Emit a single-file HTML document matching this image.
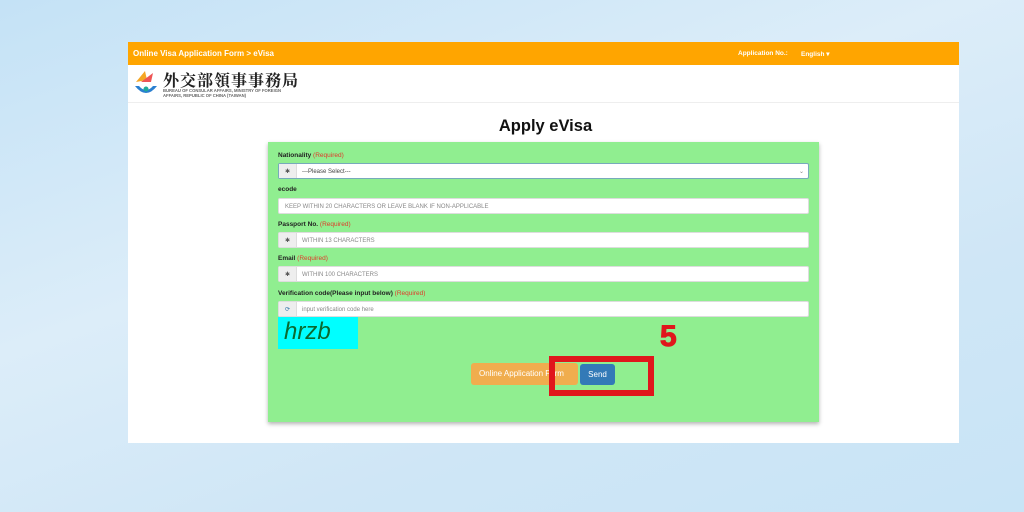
<!DOCTYPE html>
<html><head><meta charset="utf-8"><style>
*{margin:0;padding:0;box-sizing:border-box}
body{width:1024px;height:512px;overflow:hidden;position:relative;font-family:"Liberation Sans",sans-serif;background:linear-gradient(160deg,#c4e2f6 0%,#dcedf9 40%,#cfe6f6 70%,#c8e4f6 100%)}
.abs{position:absolute}
.page{left:128px;top:42px;width:831px;height:401px;background:#fff}
.bar{left:128px;top:42px;width:831px;height:23px;background:#ffa500;color:#fff;font-size:8px;font-weight:bold}
.lbl{font-size:6.5px;font-weight:bold;color:#222;left:278px}
.lbl span{color:#e03a2a;font-weight:normal}
.inp{left:278px;width:531px;height:16px;background:#fff;border-radius:2px;font-size:6px;color:#888;line-height:16px;border:1px solid #ddd}
.ad{display:inline-block;width:18px;height:100%;background:#eee;text-align:center;color:#555;margin-right:5px;border-right:1px solid #ddd;vertical-align:top}
</style></head><body>
<div class="abs page"></div>
<div class="abs bar"><span class="abs" style="left:5px;top:7px">Online Visa Application Form &gt; eVisa</span><span class="abs" style="left:610px;top:8px;font-size:6.5px">Application No.:</span><span class="abs" style="left:673px;top:8px;font-size:6.5px">English ▾</span></div>
<svg class="abs" style="left:133px;top:68px" width="26" height="32" viewBox="0 0 26 32"><path d="M3 14 L12 3 L14 12 Z" fill="#f5a623"/><path d="M8 14 L20 5 L18 14Z" fill="#e55"/><path d="M2 18 Q13 32 24 18 L20 18 Q13 26 6 18Z" fill="#2a7fd0"/><circle cx="13" cy="21" r="2.5" fill="#2a9"/></svg>
<div class="abs" style="left:163px;top:68px;font-family:'Noto Serif CJK SC',serif;font-size:16px;font-weight:bold;color:#222;letter-spacing:1px">外交部領事事務局</div>
<div class="abs" style="left:163px;top:88px;font-size:4.2px;color:#666;line-height:5px;font-weight:bold">BUREAU OF CONSULAR AFFAIRS, MINISTRY OF FOREIGN<br>AFFAIRS, REPUBLIC OF CHINA (TAIWAN)</div>
<div class="abs" style="left:128px;top:102px;width:831px;height:1px;background:#eee"></div>
<div class="abs" style="left:128px;top:117px;width:831px;text-align:center;font-size:16.5px;font-weight:bold;color:#111;padding-left:4px">Apply eVisa</div>
<div class="abs" style="left:268px;top:142px;width:551px;height:280px;background:#90ee90;box-shadow:0 2px 4px rgba(0,0,0,.3)"></div>
<div class="abs lbl" style="top:152px">Nationality <span>(Required)</span></div>
<div class="abs inp" style="top:163px;border-color:#7ab"><span class="ad">✱</span><span style="color:#444">---Please Select---</span><span style="position:absolute;right:4px">⌄</span></div>
<div class="abs lbl" style="top:186px">ecode</div>
<div class="abs inp" style="top:198px;padding-left:6px">KEEP WITHIN 20 CHARACTERS OR LEAVE BLANK IF NON-APPLICABLE</div>
<div class="abs lbl" style="top:221px">Passport No. <span>(Required)</span></div>
<div class="abs inp" style="top:232px"><span class="ad">✱</span>WITHIN 13 CHARACTERS</div>
<div class="abs lbl" style="top:255px">Email <span>(Required)</span></div>
<div class="abs inp" style="top:266px"><span class="ad">✱</span>WITHIN 100 CHARACTERS</div>
<div class="abs lbl" style="top:290px">Verification code(Please input below) <span>(Required)</span></div>
<div class="abs inp" style="top:301px"><span class="ad" style="color:#37a">⟳</span>input verification code here</div>
<div class="abs" style="left:278px;top:317px;width:80px;height:32px;background:#00ffff;color:#0a6a30;font-size:24px;font-style:italic;padding-left:6px;line-height:30px">hrzb</div>
<div class="abs" style="left:471px;top:363px;width:107px;height:22px;background:#f0ad4e;border-radius:3px;color:#fff;font-size:8px;line-height:22px;padding-left:8px">Online Application Form</div>
<div class="abs" style="left:580px;top:364px;width:35px;height:21px;background:#337ab7;border-radius:3px;color:#fff;font-size:8px;line-height:21px;text-align:center">Send</div>
<div class="abs" style="left:549px;top:356px;width:105px;height:40px;border:6px solid #e0161c"></div>
<div class="abs" style="left:660px;top:320px;font-size:30px;font-weight:900;color:#e0161c;-webkit-text-stroke:1px #e0161c">5</div>
</body></html>
